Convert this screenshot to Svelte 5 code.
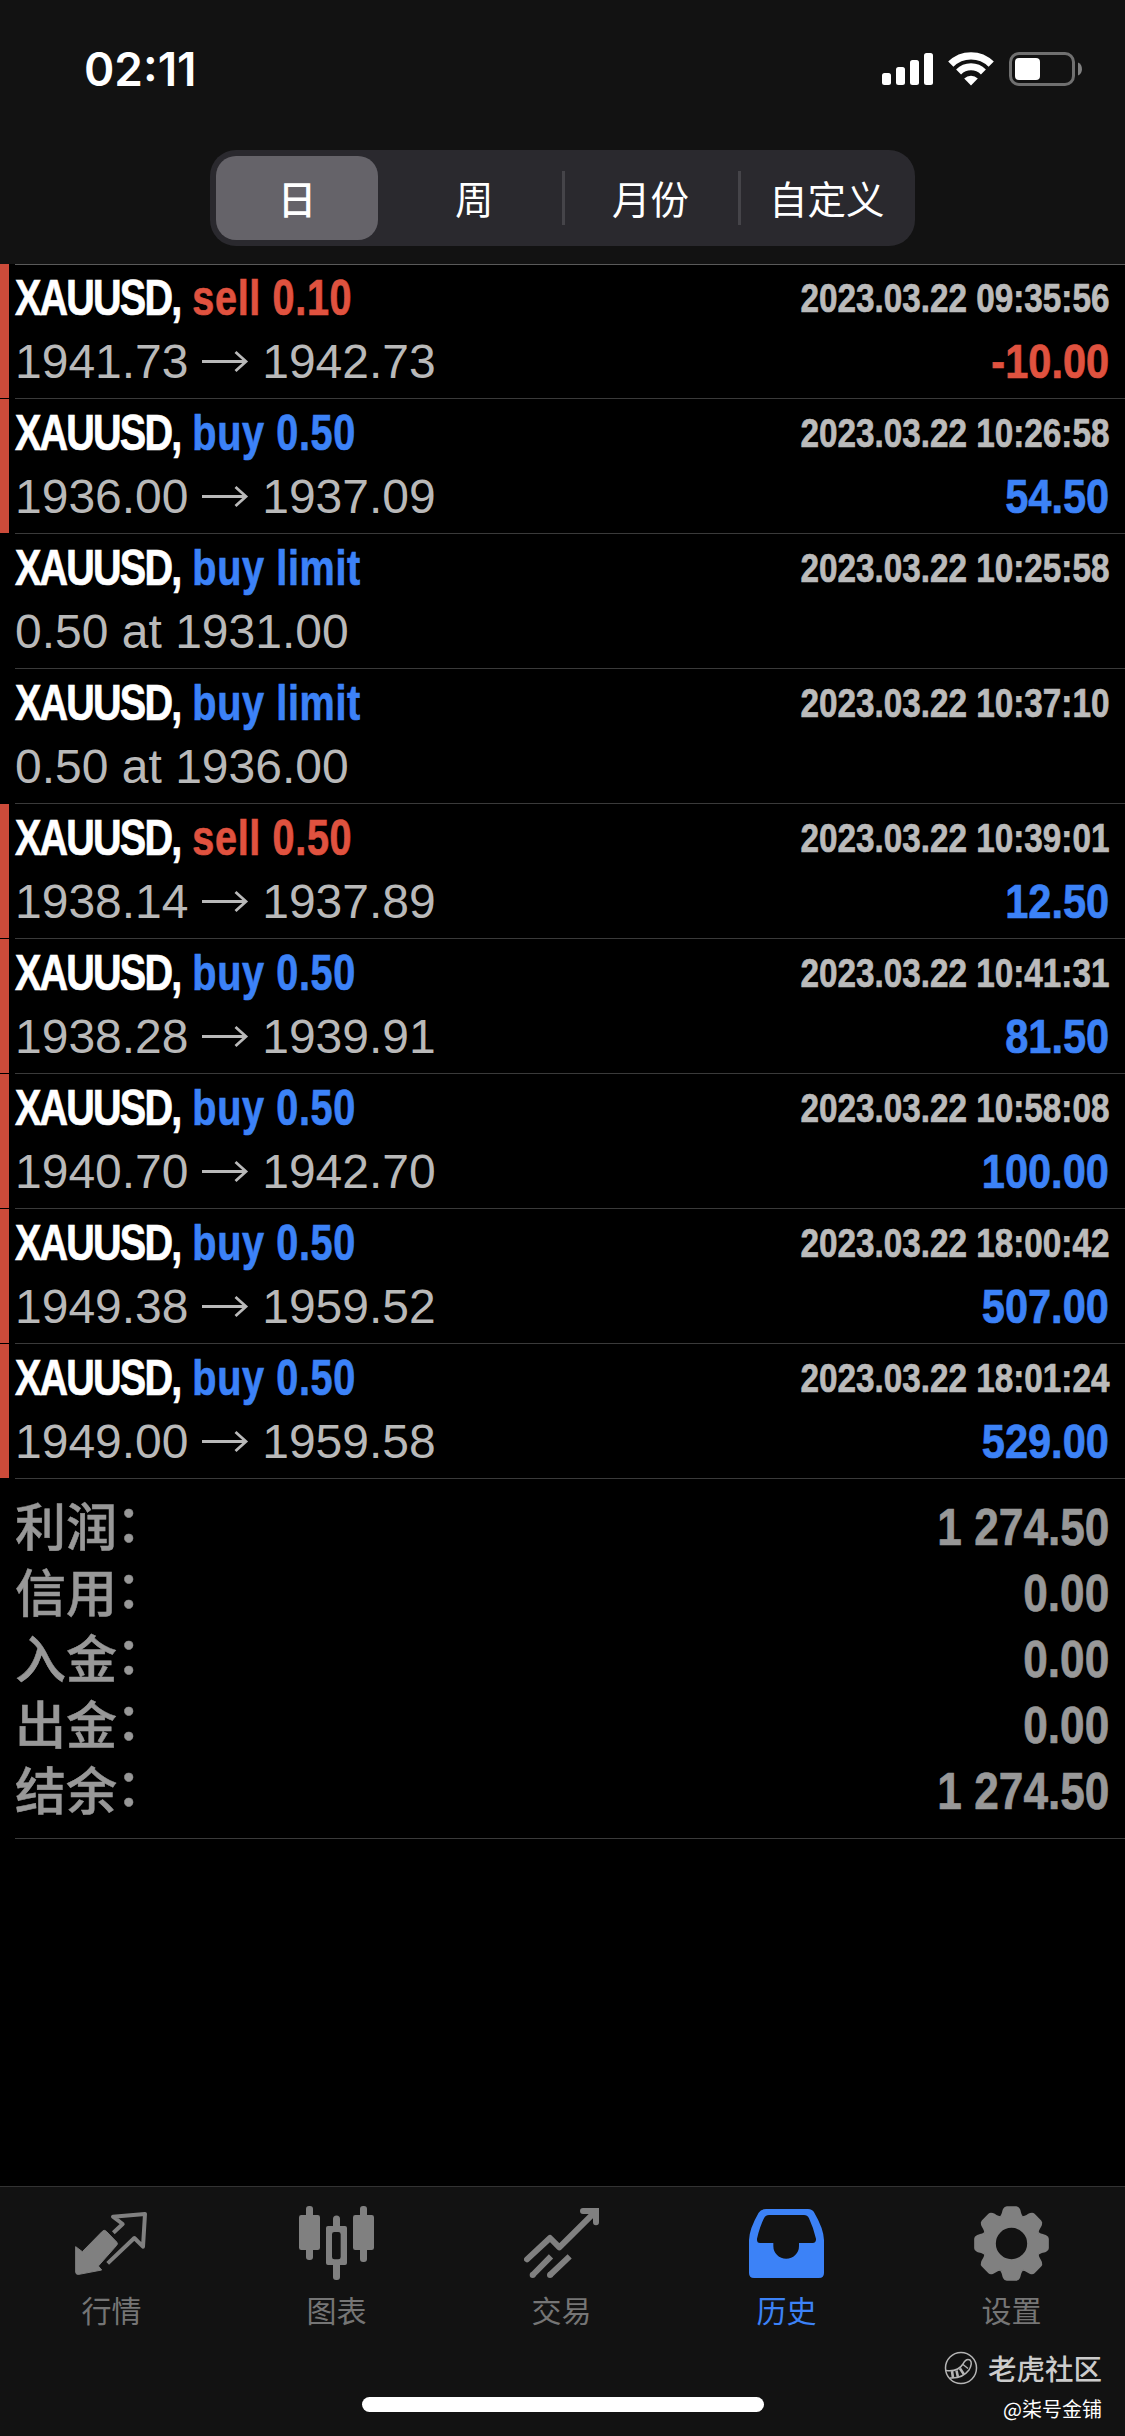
<script>
  const periods = ['日', '周', '月份', '自定义'];
  let period = $state('日');
  let activeTab = $state('历史');

  const deals = [
    { side: 'sell', label: 'sell 0.10', time: '2023.03.22 09:35:56', open: '1941.73', close: '1942.73', profit: '-10.00' },
    { side: 'buy', label: 'buy 0.50', time: '2023.03.22 10:26:58', open: '1936.00', close: '1937.09', profit: '54.50' },
    { side: 'buy', label: 'buy limit', time: '2023.03.22 10:25:58', note: '0.50 at 1931.00' },
    { side: 'buy', label: 'buy limit', time: '2023.03.22 10:37:10', note: '0.50 at 1936.00' },
    { side: 'sell', label: 'sell 0.50', time: '2023.03.22 10:39:01', open: '1938.14', close: '1937.89', profit: '12.50' },
    { side: 'buy', label: 'buy 0.50', time: '2023.03.22 10:41:31', open: '1938.28', close: '1939.91', profit: '81.50' },
    { side: 'buy', label: 'buy 0.50', time: '2023.03.22 10:58:08', open: '1940.70', close: '1942.70', profit: '100.00' },
    { side: 'buy', label: 'buy 0.50', time: '2023.03.22 18:00:42', open: '1949.38', close: '1959.52', profit: '507.00' },
    { side: 'buy', label: 'buy 0.50', time: '2023.03.22 18:01:24', open: '1949.00', close: '1959.58', profit: '529.00' }
  ];

  const totals = [
    ['利润', '1 274.50'],
    ['信用', '0.00'],
    ['入金', '0.00'],
    ['出金', '0.00'],
    ['结余', '1 274.50']
  ];

  const tabs = [
    { name: '行情', icon: 'quotes' },
    { name: '图表', icon: 'chart' },
    { name: '交易', icon: 'trade' },
    { name: '历史', icon: 'history' },
    { name: '设置', icon: 'settings' }
  ];

  const teeth = [0, 45, 90, 135, 180, 225, 270, 315];
</script>

<div class="screen">
  <header>
    <div class="status">
      <span class="clock">02:11</span>
      <div class="status-icons">
        <svg class="signal" viewBox="0 0 51 34" fill="#fff">
          <rect x="0" y="21" width="9" height="12" rx="2.5" />
          <rect x="14" y="15" width="9" height="18" rx="2.5" />
          <rect x="28" y="8" width="9" height="25" rx="2.5" />
          <rect x="42" y="1" width="9" height="32" rx="2.5" />
        </svg>
        <svg class="wifi" viewBox="0 0 46 34" fill="none" stroke="#fff">
          <path d="M2.8 12.200a28.600 28.600 0 0 1 40.400 0" stroke-width="7.400" />
          <path d="M10.600 20a17.500 17.500 0 0 1 24.800 0" stroke-width="7" />
          <path d="M23 33.400l-6.800-6.900a9.700 9.700 0 0 1 13.600 0z" fill="#fff" stroke="none" />
        </svg>
        <svg class="battery" viewBox="0 0 74 34">
          <rect x="1.5" y="1.5" width="63" height="31" rx="8.5" fill="none" stroke="#707070" stroke-width="3" />
          <rect x="6" y="6" width="25" height="22" rx="4" fill="#fff" />
          <path d="M69 10.500c5.300 2 5.300 11 0 13z" fill="#808080" />
        </svg>
      </div>
    </div>
    <div class="segments">
      {#each periods as p}
        <button class:selected={p === period} onclick={() => (period = p)}>{p}</button>
      {/each}
    </div>
  </header>

  <main>
    {#each deals as deal}
      <div class="deal">
        <div class="mark" class:filled={deal.profit}></div>
        <div class="body">
          <div class="line top">
            <span class="title"><span class="symbol">XAUUSD,</span><span class={deal.side}>{deal.label}</span></span>
            <span class="time">{deal.time}</span>
          </div>
          <div class="line">
            {#if deal.note}
              <span class="price">{deal.note}</span>
            {:else}
              <span class="price">
                {deal.open}
                <svg class="arrow" viewBox="0 0 47 24" fill="none" stroke="currentColor" stroke-width="2.8">
                  <path d="M0 12.500H44M33.500 3L44 12.500L33.500 22" />
                </svg>
                {deal.close}
              </span>
              <span class="profit {deal.profit.startsWith('-') ? 'sell' : 'buy'}">{deal.profit}</span>
            {/if}
          </div>
        </div>
      </div>
    {/each}

    <div class="totals">
      {#each totals as [label, value]}
        <div class="total">
          <span class="total-label">{label}<span class="colon">：</span></span>
          <span class="total-value">{value}</span>
        </div>
      {/each}
    </div>
  </main>

  <footer>
    <nav>
      {#each tabs as tab}
        <button class="tab" class:active={tab.name === activeTab} onclick={() => (activeTab = tab.name)}>
          <svg viewBox="-3 0 225 225" fill="currentColor">
            {#if tab.icon === 'quotes'}
              <path d="M2 122L22 137L82 76Q88 70 94 76L125 108Q130 113 125 118L70 180L80 192L12 205Q2 207 2 198Z" stroke="currentColor" stroke-width="3" stroke-linejoin="round" />
              <path d="M115 80L143 54L114 32L210 24L204 122L178 96L98 172" fill="none" stroke="currentColor" stroke-width="12" stroke-linejoin="round" />
            {:else if tab.icon === 'chart'}
              <rect x="-3" y="27" width="63" height="105" rx="7" />
              <rect x="18" y="0" width="21" height="162" rx="9" />
              <path d="M84 60H135a6 6 0 0 1 6 6V171a6 6 0 0 1-6 6H84a6 6 0 0 1-6-6V66a6 6 0 0 1 6-6zM103 78a7 7 0 0 0-7 7V153a7 7 0 0 0 7 7H115a7 7 0 0 0 7-7V85a7 7 0 0 0-7-7z" fill-rule="evenodd" />
              <path d="M99 62V39a9 9 0 0 1 21 0V62z" />
              <rect x="99" y="168" width="21" height="54" rx="9" />
              <rect x="159" y="27" width="63" height="105" rx="7" />
              <rect x="180" y="0" width="21" height="168" rx="9" />
            {:else if tab.icon === 'trade'}
              <g fill="none" stroke="currentColor" stroke-width="18" stroke-linejoin="round">
                <path d="M6 160L75 96L103 124L208 20" stroke-linecap="round" />
                <path d="M174 15H213V49" stroke-linecap="round" stroke-linejoin="miter" />
                <path d="M23 207L78 151M75 207L134 151" />
              </g>
              <circle cx="23" cy="207" r="9" />
              <circle cx="75" cy="207" r="9" />
            {:else if tab.icon === 'history'}
              <path fill-rule="evenodd" d="M48 9H174Q187 9 193 20Q221 68 222 102V201Q222 216 207 216H12Q-3 216-3 201V102Q-2 68 26 20Q32 9 48 9ZM57 27Q47 27 42 37Q30 60 21 98Q20 111 30 111H70V120A38 38 0 0 0 147 120V111H188Q199 111 198 98Q190 65 177 37Q172 27 162 27Z" />
            {:else}
              <g transform="translate(109.5 112.5)">
                <circle r="67" fill="none" stroke="currentColor" stroke-width="40" />
                {#each teeth as angle}
                  <path d="M-36-80C-28-86-29-96-25-104Q-21-112-14-112H14Q21-112 25-104C29-96 28-86 36-80Z" transform="rotate({angle})" />
                {/each}
              </g>
            {/if}
          </svg>
          <span>{tab.name}</span>
        </button>
      {/each}
    </nav>
    <div class="home-bar"></div>
    <div class="watermark">
      <div class="brand">
        <svg viewBox="0 0 34 34" fill="none" stroke="#b5b5b5" stroke-width="1.5">
          <circle cx="17" cy="17" r="15.500" />
          <path d="M2 19.500Q14 21 19 13Q22 7 26 9Q29 12 25 19Q18 28 6 27" />
          <path d="M8 20l1 7M12.500 19.500l1.500 7M16 17.500l4 6" stroke-width="2.600" />
          <path d="M19 13.500l5 4" />
        </svg>
        <span>老虎社区</span>
      </div>
      <div class="author">@柒号金铺</div>
    </div>
  </footer>
</div>

<style>
  :global(body) {
    margin: 0;
    background: #000;
  }

  .screen {
    display: flex;
    flex-direction: column;
    width: 1125px;
    height: 2436px;
    overflow: hidden;
    background: #000;
    color: #fff;
    font-family: "Liberation Sans", "Noto Sans CJK SC", sans-serif;
  }

  button {
    padding: 0;
    border: none;
    background: none;
    color: inherit;
    font-family: "Noto Sans CJK SC", sans-serif;
  }

  header {
    height: 264px;
    background: #121212;
  }

  .status {
    display: flex;
    justify-content: space-between;
    align-items: center;
    height: 138px;
    padding: 0 42px 0 84px;
  }

  .clock {
    font-family: Inter, sans-serif;
    font-size: 46px;
    font-weight: 600;
  }

  .status-icons {
    display: flex;
    gap: 15px;
  }

  .status-icons svg {
    display: block;
    height: 34px;
  }

  .signal { width: 51px; }
  .wifi { width: 46px; }
  .battery { width: 74px; }

  .segments {
    display: grid;
    grid-template-columns: repeat(4, 1fr);
    width: 705px;
    height: 96px;
    margin: 12px 0 0 210px;
    border-radius: 26px;
    background: #2a292e;
  }

  .segments button {
    position: relative;
    padding-bottom: 3px;
    font-size: 38.5px;
    line-height: 92px;
  }

  .segments .selected {
    margin: 6px 8px 6px 6px;
    border-radius: 20px;
    background: #656369;
    font-weight: 500;
    line-height: 80px;
  }

  .segments button:nth-child(n + 3)::before {
    content: "";
    position: absolute;
    left: -1px;
    top: 21px;
    width: 3px;
    height: 54px;
    background: #454449;
  }

  main {
    flex: 1;
  }

  .deal {
    display: flex;
    height: 135px;
  }

  .mark {
    width: 9px;
    height: 134px;
    margin-right: 6px;
  }

  .mark.filled {
    background: #cb4b3a;
  }

  .body {
    flex: 1;
    box-sizing: border-box;
    padding-right: 16px;
    border-bottom: 1px solid #3a3a3a;
  }

  .deal:first-child .body {
    box-shadow: inset 0 1px #5a5a5a;
  }

  .line {
    display: flex;
    justify-content: space-between;
    height: 63px;
    line-height: 65px;
    white-space: nowrap;
  }

  .line.top {
    height: 65px;
    line-height: 68px;
  }

  /* condensed bold face made by squeezing the regular bold */
  .title,
  .time,
  .profit,
  .total-value {
    font-weight: 700;
    -webkit-text-stroke: 0.7px currentColor;
  }

  .title {
    font-size: 49.5px;
    letter-spacing: 0.8px;
    transform: scaleX(0.8);
    transform-origin: left;
  }

  .symbol {
    margin-right: 15px;
    letter-spacing: -2.3px;
  }

  .time {
    color: #bbb;
    font-size: 40px;
    line-height: 68px;
    transform: scaleX(0.832);
    transform-origin: right;
  }

  .price {
    color: #b9b9b9;
    font-size: 48px;
  }

  .arrow {
    width: 47px;
    height: 24px;
    vertical-align: 5px;
  }

  .profit {
    font-size: 48px;
    transform: scaleX(0.865);
    transform-origin: right;
  }

  .buy { color: #3c82f7; }
  .sell { color: #e0523f; }

  .totals {
    box-sizing: border-box;
    height: 360px;
    margin-left: 15px;
    padding: 15px 16px 0 0;
    border-bottom: 1px solid #3a3a3a;
    color: #989898;
  }

  .total {
    display: flex;
    justify-content: space-between;
    height: 66px;
    line-height: 66px;
  }

  .total-label {
    font-size: 51px;
    font-weight: 500;
    line-height: 69px;
    -webkit-text-stroke: 0.5px currentColor;
  }

  .colon {
    position: relative;
    top: -4px;
    margin-left: -1px;
  }

  .total-value {
    font-size: 52px;
    transform: scaleX(0.85);
    transform-origin: right;
  }

  footer {
    position: relative;
    box-sizing: border-box;
    height: 250px;
    border-top: 1px solid #333;
    background: #121212;
  }

  nav {
    display: grid;
    grid-template-columns: repeat(5, 1fr);
    padding-top: 19px;
  }

  .tab {
    display: flex;
    flex-direction: column;
    align-items: center;
    padding-right: 2px;
    color: #808080;
  }

  .tab svg {
    width: 75px;
    height: 75px;
  }

  .tab span {
    margin-top: 6px;
    font-size: 30px;
    line-height: 44px;
    color: #757575;
  }

  .tab.active,
  .tab.active span {
    color: #3c82f7;
  }

  .home-bar {
    width: 402px;
    height: 15px;
    margin: 66px auto 0;
    border-radius: 8px;
    background: #fff;
  }

  .watermark {
    position: absolute;
    right: 23px;
    bottom: 12px;
    display: flex;
    flex-direction: column;
    align-items: flex-end;
    font-family: "Noto Sans CJK SC", sans-serif;
  }

  .brand {
    display: flex;
    align-items: center;
    gap: 10px;
    color: #ccc;
    font-size: 28.5px;
    font-weight: 500;
    line-height: 40px;
  }

  .brand svg {
    width: 34px;
    height: 34px;
  }

  .author {
    margin-top: 6px;
    font-size: 20px;
    line-height: 30px;
  }
</style>
